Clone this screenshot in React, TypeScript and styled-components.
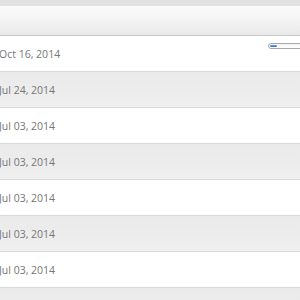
import React from "react";
import styled, { createGlobalStyle } from "styled-components";

const dates = [
  "Oct 16, 2014",
  "Jul 24, 2014",
  "Jul 03, 2014",
  "Jul 03, 2014",
  "Jul 03, 2014",
  "Jul 03, 2014",
  "Jul 03, 2014",
  "Jul 03, 2014",
];

export default function App() {
  return (
    <>
      <GlobalStyle />
      <Page>
        <TopStrip />
        <Header />
        <List>
          {dates.map((d, i) => (
            <Row key={i} striped={i % 2 === 1}>
              <DateText>{d}</DateText>
              {i === 0 && (
                <Progress>
                  <ProgressFill style={{ width: "7px" }} />
                </Progress>
              )}
            </Row>
          ))}
        </List>
      </Page>
    </>
  );
}

const GlobalStyle = createGlobalStyle`
  * {
    box-sizing: border-box;
  }
  body, html, #root {
    margin: 0;
    padding: 0;
    height: 100%;
    overflow: hidden;
    background: #ffffff;
    font-family: "Open Sans", sans-serif;
  }
`;

const Page = styled.div`
  display: flex;
  flex-direction: column;
  height: 100%;
  overflow: hidden;
`;

const TopStrip = styled.div`
  height: 6px;
  flex-shrink: 0;
  background: #e2e2e2;
`;

const Header = styled.div`
  height: 30px;
  flex-shrink: 0;
  background: linear-gradient(#fbfbfb, #f3f3f3 50%, #e9e9e9);
  border-bottom: 1px solid #c9c9c9;
`;

const List = styled.div`
  display: flex;
  flex-direction: column;
`;

const Row = styled.div<{ striped: boolean }>`
  height: 36px;
  flex-shrink: 0;
  display: flex;
  align-items: center;
  justify-content: space-between;
  border-bottom: 1px solid #dadada;
  background: ${({ striped }) =>
    striped ? "linear-gradient(#eaeaea, #efefef)" : "#ffffff"};
`;

const DateText = styled.span`
  margin-left: -1px;
  font-size: 10.5px;
  color: #767676;
`;

const Progress = styled.div`
  align-self: flex-start;
  margin-top: 7px;
  margin-right: -20px;
  width: 52px;
  height: 6px;
  border: 1px solid #a8a8a8;
  border-radius: 3px;
  background: linear-gradient(#f4f4f4, #ffffff);
  padding: 1px;
  display: flex;
`;

const ProgressFill = styled.div`
  height: 100%;
  border-radius: 2px;
  background: linear-gradient(#6aa0f0, #2a6fd8);
`;
